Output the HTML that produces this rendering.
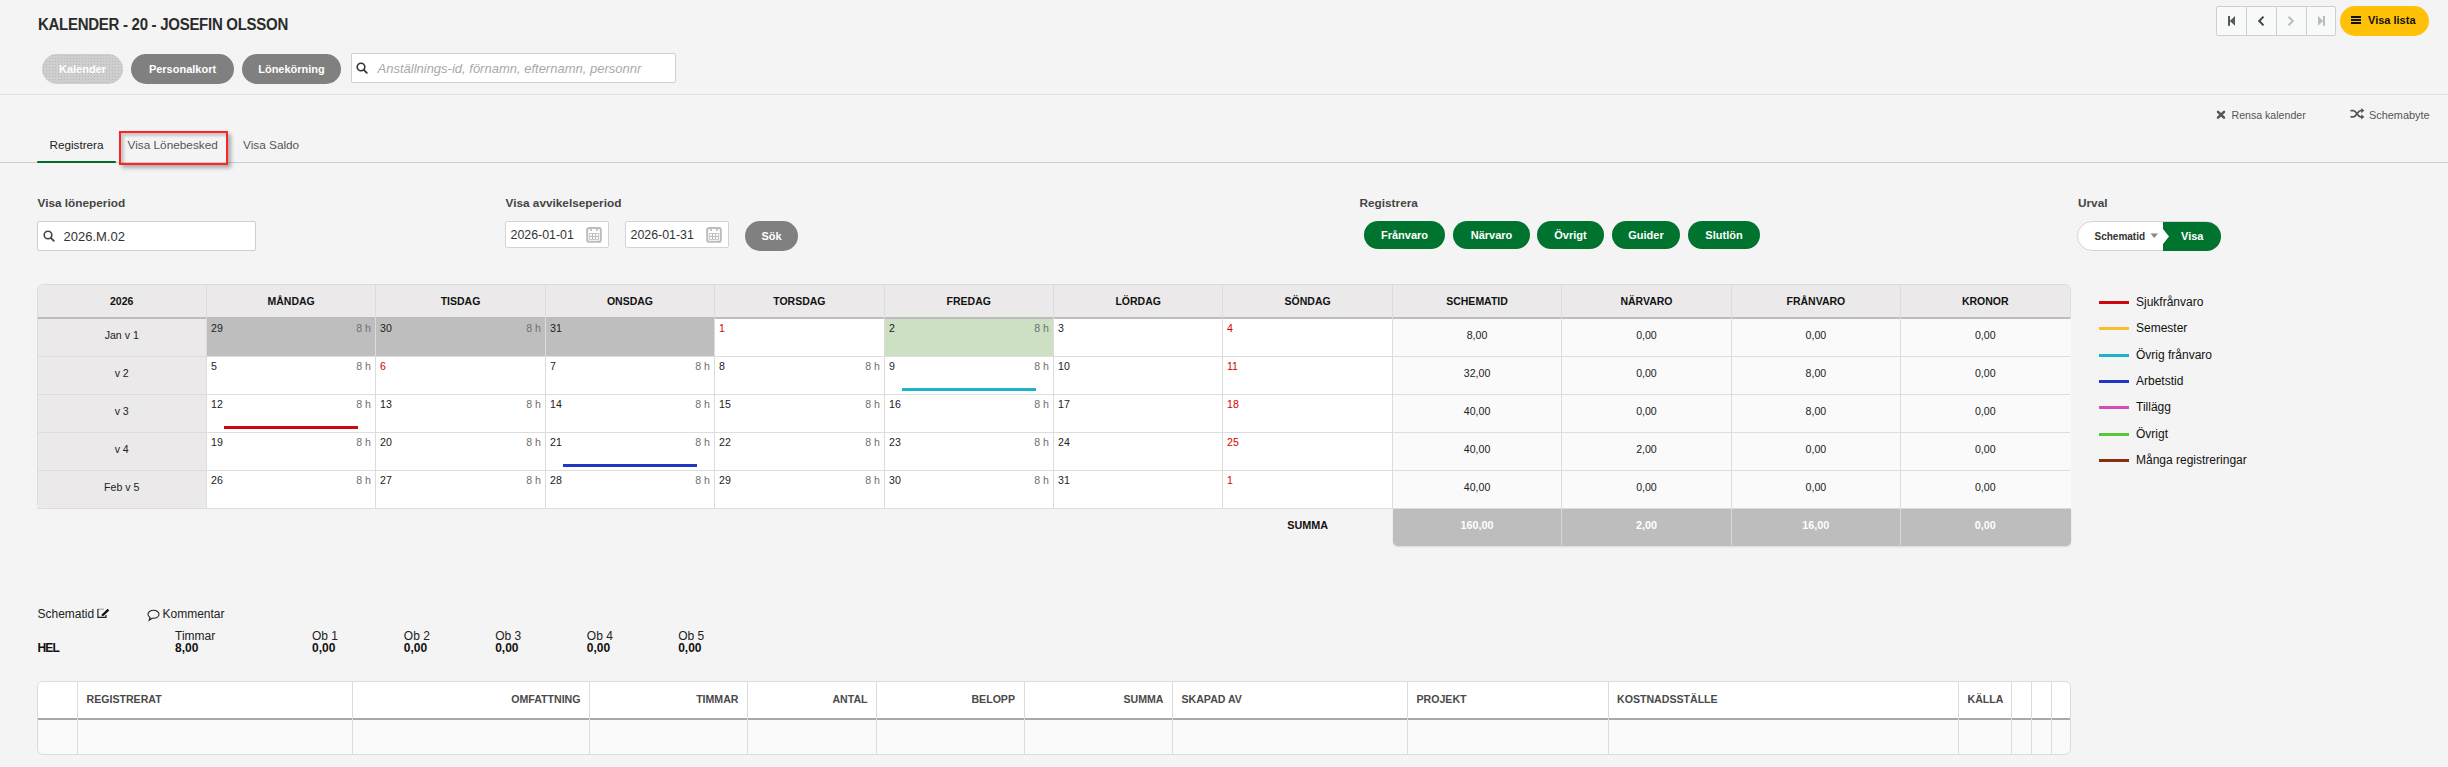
<!DOCTYPE html>
<html><head><meta charset="utf-8"><title>Kalender</title>
<style>
html,body{margin:0;padding:0;}
body{width:2448px;height:767px;position:relative;overflow:hidden;background:#f4f4f4;font-family:"Liberation Sans",sans-serif;}
.a{position:absolute;box-sizing:border-box;}
.t{position:absolute;white-space:nowrap;line-height:20px;font-family:"Liberation Sans",sans-serif;}
svg{position:absolute;overflow:visible;}
</style></head><body>
<div class="t" style="left:38px;top:15px;font-size:15.6px;font-weight:bold;color:#2b2b2b;letter-spacing:-0.3px;transform:scaleX(0.963);transform-origin:0 0;">KALENDER - 20 - JOSEFIN OLSSON</div>
<div class="a" style="left:42px;top:54px;width:81px;height:30px;background-color:#cecece;background-image:radial-gradient(circle, #b9b9b9 0.6px, transparent 0.9px);background-size:3px 3px;border-radius:15px;"></div>
<div class="t" style="left:42.0px;width:81px;text-align:center;top:59px;font-size:11px;font-weight:bold;color:#fff;">Kalender</div>
<div class="a" style="left:131px;top:54px;width:103px;height:30px;background:#808080;border-radius:15px;"></div>
<div class="t" style="left:131.0px;width:103px;text-align:center;top:59px;font-size:11px;font-weight:bold;color:#fff;">Personalkort</div>
<div class="a" style="left:242px;top:54px;width:99px;height:30px;background:#808080;border-radius:15px;"></div>
<div class="t" style="left:242.0px;width:99px;text-align:center;top:59px;font-size:11px;font-weight:bold;color:#fff;">Lönekörning</div>
<div class="a" style="left:351px;top:53px;width:325px;height:30px;background:#fff;border:1px solid #cfcfcf;border-radius:2px;"></div>
<svg style="left:356px;top:62px" width="13" height="13" viewBox="0 0 13 13"><circle cx="5" cy="5" r="3.8" fill="none" stroke="#333" stroke-width="1.6"/><line x1="7.8" y1="7.8" x2="10.8" y2="10.8" stroke="#333" stroke-width="1.8" stroke-linecap="round"/></svg>
<div class="t" style="left:377.5px;top:59px;font-size:13px;font-weight:normal;color:#a9a9a9;font-style:italic;">Anställnings-id, förnamn, efternamn, personnr</div>
<div class="a" style="left:0px;top:94px;width:2448px;height:1px;background:#e2e2e2;"></div>
<div class="a" style="left:2216px;top:6px;width:120px;height:30px;background:#f8f9f9;border:1px solid #cfcfcf;border-radius:2px;"></div>
<div class="a" style="left:2246px;top:7px;width:1px;height:28px;background:#cfcfcf;"></div>
<div class="a" style="left:2276px;top:7px;width:1px;height:28px;background:#cfcfcf;"></div>
<div class="a" style="left:2306px;top:7px;width:1px;height:28px;background:#cfcfcf;"></div>
<svg style="left:2227px;top:15px" width="10" height="11" viewBox="0 0 10 11"><rect x="1" y="1" width="2" height="9.8" fill="#585858"/><path d="M8 1 L8 10.8 L2.8 5.9 Z" fill="#585858"/></svg>
<svg style="left:2256px;top:15px" width="10" height="12" viewBox="0 0 10 12"><path d="M7.5 1.6 L3.2 6 L7.5 10.4" fill="none" stroke="#444" stroke-width="2"/></svg>
<svg style="left:2286px;top:15px" width="10" height="12" viewBox="0 0 10 12"><path d="M2.5 1.6 L6.8 6 L2.5 10.4" fill="none" stroke="#bbb" stroke-width="2"/></svg>
<svg style="left:2316px;top:15px" width="10" height="11" viewBox="0 0 10 11"><rect x="7" y="1" width="2" height="9.8" fill="#bbb"/><path d="M2 1 L2 10.8 L7.2 5.9 Z" fill="#bbb"/></svg>
<div class="a" style="left:2340px;top:6px;width:89px;height:30px;background:#ffc107;border-radius:15px;"></div>
<svg style="left:2351px;top:16px" width="10" height="9" viewBox="0 0 10 9"><rect x="0" y="0" width="10" height="2" fill="#111"/><rect x="0" y="3" width="10" height="2" fill="#111"/><rect x="0" y="6" width="10" height="2" fill="#111"/></svg>
<div class="t" style="left:2368px;top:10px;font-size:11px;font-weight:bold;color:#111;">Visa lista</div>
<div class="a" style="left:0px;top:162px;width:2448px;height:1px;background:#cccccc;"></div>
<div class="a" style="left:37px;top:161px;width:79px;height:2px;background:#006b2a;border-radius:1px;"></div>
<div class="t" style="left:49.5px;top:135px;font-size:11.7px;font-weight:normal;color:#222;">Registrera</div>
<div class="a" style="left:119px;top:131px;width:109px;height:34px;border:2px solid #ff2424;box-shadow:3px 3px 4px rgba(0,0,0,0.3), inset 3px 3px 3px rgba(0,0,0,0.18);"></div>
<div class="t" style="left:127.5px;top:135px;font-size:11.8px;font-weight:normal;color:#555;">Visa Lönebesked</div>
<div class="t" style="left:243px;top:135px;font-size:11.8px;font-weight:normal;color:#555;">Visa Saldo</div>
<svg style="left:2216px;top:110px" width="10" height="10" viewBox="0 0 10 10"><path d="M2 1.8 L8 7.6 M8 1.8 L2 7.6" stroke="#555" stroke-width="2.5" stroke-linecap="round"/></svg>
<div class="t" style="left:2231.5px;top:104.7px;font-size:10.6px;font-weight:normal;color:#555;">Rensa kalender</div>
<svg style="left:2350px;top:107px" width="15" height="13" viewBox="0 0 15 13"><path d="M0.5 3.6 H3.5 C6.5 3.6 7.5 9.9 10.5 9.9 H12" fill="none" stroke="#555" stroke-width="1.7"/><path d="M0.5 9.9 H3.5 C6.5 9.9 7.5 3.6 10.5 3.6 H12" fill="none" stroke="#555" stroke-width="1.7"/><path d="M11.3 0.9 L14.3 3.6 L11.3 6.3 Z" fill="#555"/><path d="M11.3 7.2 L14.3 9.9 L11.3 12.6 Z" fill="#555"/></svg>
<div class="t" style="left:2369px;top:104.7px;font-size:10.9px;font-weight:normal;color:#555;">Schemabyte</div>
<div class="t" style="left:37.5px;top:193px;font-size:11.8px;font-weight:bold;color:#444;">Visa löneperiod</div>
<div class="t" style="left:505.5px;top:193px;font-size:11.8px;font-weight:bold;color:#444;">Visa avvikelseperiod</div>
<div class="t" style="left:1359.5px;top:193px;font-size:11.8px;font-weight:bold;color:#444;">Registrera</div>
<div class="t" style="left:2078px;top:193px;font-size:11.8px;font-weight:bold;color:#444;">Urval</div>
<div class="a" style="left:37px;top:221px;width:219px;height:30px;background:#fff;border:1px solid #cfcfcf;border-radius:2px;"></div>
<svg style="left:43px;top:230px" width="13" height="13" viewBox="0 0 13 13"><circle cx="5" cy="5" r="3.8" fill="none" stroke="#444" stroke-width="1.6"/><line x1="7.8" y1="7.8" x2="10.8" y2="10.8" stroke="#444" stroke-width="1.8" stroke-linecap="round"/></svg>
<div class="t" style="left:63.5px;top:227px;font-size:13px;font-weight:normal;color:#333;">2026.M.02</div>
<div class="a" style="left:505px;top:221px;width:104px;height:27px;background:#fff;border:1px solid #d3d3d3;border-radius:2px;"></div>
<div class="t" style="left:510.5px;top:225px;font-size:12.4px;font-weight:normal;color:#333;">2026-01-01</div>
<svg style="left:586px;top:227px" width="16" height="16" viewBox="0 0 16 16"><rect x="1.2" y="1.1" width="13.6" height="13.6" rx="1.8" fill="none" stroke="#bcbcbc" stroke-width="2"/><rect x="4.2" y="2" width="1.7" height="2" fill="#bcbcbc"/><rect x="10.1" y="2" width="1.7" height="2" fill="#bcbcbc"/><rect x="3.2" y="6" width="9.6" height="6.8" fill="#bcbcbc"/><g fill="#fff"><rect x="4" y="6.9" width="2" height="2"/><rect x="7" y="6.9" width="2" height="2"/><rect x="9.9" y="6.9" width="2" height="2"/><rect x="4" y="10" width="2" height="2"/><rect x="7" y="10" width="2" height="2"/><rect x="9.9" y="10" width="2" height="2"/></g></svg>
<div class="a" style="left:625px;top:221px;width:104px;height:27px;background:#fff;border:1px solid #d3d3d3;border-radius:2px;"></div>
<div class="t" style="left:630.5px;top:225px;font-size:12.4px;font-weight:normal;color:#333;">2026-01-31</div>
<svg style="left:706px;top:227px" width="16" height="16" viewBox="0 0 16 16"><rect x="1.2" y="1.1" width="13.6" height="13.6" rx="1.8" fill="none" stroke="#bcbcbc" stroke-width="2"/><rect x="4.2" y="2" width="1.7" height="2" fill="#bcbcbc"/><rect x="10.1" y="2" width="1.7" height="2" fill="#bcbcbc"/><rect x="3.2" y="6" width="9.6" height="6.8" fill="#bcbcbc"/><g fill="#fff"><rect x="4" y="6.9" width="2" height="2"/><rect x="7" y="6.9" width="2" height="2"/><rect x="9.9" y="6.9" width="2" height="2"/><rect x="4" y="10" width="2" height="2"/><rect x="7" y="10" width="2" height="2"/><rect x="9.9" y="10" width="2" height="2"/></g></svg>
<div class="a" style="left:745px;top:221px;width:53px;height:30px;background:#808080;border-radius:15px;"></div>
<div class="t" style="left:745.0px;width:53px;text-align:center;top:226px;font-size:11px;font-weight:bold;color:#fff;">Sök</div>
<div class="a" style="left:1364px;top:221px;width:81px;height:28px;background:#00732f;border-radius:14px;"></div>
<div class="t" style="left:1364.0px;width:81px;text-align:center;top:225px;font-size:11px;font-weight:bold;color:#fff;">Frånvaro</div>
<div class="a" style="left:1453px;top:221px;width:77px;height:28px;background:#00732f;border-radius:14px;"></div>
<div class="t" style="left:1453.0px;width:77px;text-align:center;top:225px;font-size:11px;font-weight:bold;color:#fff;">Närvaro</div>
<div class="a" style="left:1537px;top:221px;width:67px;height:28px;background:#00732f;border-radius:14px;"></div>
<div class="t" style="left:1537.0px;width:67px;text-align:center;top:225px;font-size:11px;font-weight:bold;color:#fff;">Övrigt</div>
<div class="a" style="left:1612px;top:221px;width:68px;height:28px;background:#00732f;border-radius:14px;"></div>
<div class="t" style="left:1612.0px;width:68px;text-align:center;top:225px;font-size:11px;font-weight:bold;color:#fff;">Guider</div>
<div class="a" style="left:1688px;top:221px;width:72px;height:28px;background:#00732f;border-radius:14px;"></div>
<div class="t" style="left:1688.0px;width:72px;text-align:center;top:225px;font-size:11px;font-weight:bold;color:#fff;">Slutlön</div>
<div class="a" style="left:2077px;top:221px;width:144px;height:30px;background:#fff;border:1px solid #d5d5d5;border-radius:15px;"></div>
<div class="a" style="left:2163px;top:222px;width:58px;height:29px;background:#00732f;border-radius:0 15px 15px 0;"></div>
<svg style="left:2163px;top:222px" width="7" height="29" viewBox="0 0 7 29"><path d="M0 7 L6 14.5 L0 22 Z" fill="#fff"/></svg>
<div class="t" style="left:2094.5px;top:227px;font-size:10px;font-weight:bold;color:#333;">Schematid</div>
<svg style="left:2150px;top:233px" width="9" height="6" viewBox="0 0 9 6"><path d="M0.5 0.5 H8 L4.25 5 Z" fill="#888"/></svg>
<div class="t" style="left:2181px;top:226px;font-size:11px;font-weight:bold;color:#fff;">Visa</div>
<div class="a" style="left:37px;top:284px;width:2034px;height:225px;background:#fff;border:1px solid #dcdcdc;border-radius:6px 6px 5px 5px;overflow:hidden;"></div>
<div class="a" style="left:38px;top:285px;width:2032px;height:32px;background:#ebe9ea;border-radius:5px 5px 0 0;"></div>
<div class="a" style="left:38px;top:317px;width:2032px;height:2px;background:#bcbcbc;"></div>
<div class="a" style="left:38px;top:319px;width:168px;height:189px;background:#ebe9ea;border-radius:0 0 0 5px;"></div>
<div class="a" style="left:1393px;top:319px;width:677px;height:189px;background:#fafafa;"></div>
<div class="a" style="left:207px;top:319px;width:507px;height:37px;background:#bebebe;"></div>
<div class="a" style="left:885px;top:319px;width:168px;height:37px;background:#cde0c4;"></div>
<div class="a" style="left:38px;top:356px;width:2032px;height:1px;background:#dddddd;"></div>
<div class="a" style="left:38px;top:394px;width:2032px;height:1px;background:#dddddd;"></div>
<div class="a" style="left:38px;top:432px;width:2032px;height:1px;background:#dddddd;"></div>
<div class="a" style="left:38px;top:470px;width:2032px;height:1px;background:#dddddd;"></div>
<div class="a" style="left:206px;top:285px;width:1px;height:223px;background:#dcdcdc;"></div>
<div class="a" style="left:375px;top:285px;width:1px;height:223px;background:#dcdcdc;"></div>
<div class="a" style="left:545px;top:285px;width:1px;height:223px;background:#dcdcdc;"></div>
<div class="a" style="left:714px;top:285px;width:1px;height:223px;background:#dcdcdc;"></div>
<div class="a" style="left:884px;top:285px;width:1px;height:223px;background:#dcdcdc;"></div>
<div class="a" style="left:1053px;top:285px;width:1px;height:223px;background:#dcdcdc;"></div>
<div class="a" style="left:1222px;top:285px;width:1px;height:223px;background:#dcdcdc;"></div>
<div class="a" style="left:1392px;top:285px;width:1px;height:223px;background:#dcdcdc;"></div>
<div class="a" style="left:1561px;top:285px;width:1px;height:223px;background:#dcdcdc;"></div>
<div class="a" style="left:1731px;top:285px;width:1px;height:223px;background:#dcdcdc;"></div>
<div class="a" style="left:1900px;top:285px;width:1px;height:223px;background:#dcdcdc;"></div>
<div class="t" style="left:41.70833333333333px;width:160px;text-align:center;top:291px;font-size:10.5px;font-weight:bold;color:#111;">2026</div>
<div class="t" style="left:211.125px;width:160px;text-align:center;top:291px;font-size:10.5px;font-weight:bold;color:#111;">MÅNDAG</div>
<div class="t" style="left:380.54166666666663px;width:160px;text-align:center;top:291px;font-size:10.5px;font-weight:bold;color:#111;">TISDAG</div>
<div class="t" style="left:549.9583333333333px;width:160px;text-align:center;top:291px;font-size:10.5px;font-weight:bold;color:#111;">ONSDAG</div>
<div class="t" style="left:719.375px;width:160px;text-align:center;top:291px;font-size:10.5px;font-weight:bold;color:#111;">TORSDAG</div>
<div class="t" style="left:888.7916666666666px;width:160px;text-align:center;top:291px;font-size:10.5px;font-weight:bold;color:#111;">FREDAG</div>
<div class="t" style="left:1058.2083333333333px;width:160px;text-align:center;top:291px;font-size:10.5px;font-weight:bold;color:#111;">LÖRDAG</div>
<div class="t" style="left:1227.625px;width:160px;text-align:center;top:291px;font-size:10.5px;font-weight:bold;color:#111;">SÖNDAG</div>
<div class="t" style="left:1397.0416666666665px;width:160px;text-align:center;top:291px;font-size:10.5px;font-weight:bold;color:#111;">SCHEMATID</div>
<div class="t" style="left:1566.4583333333333px;width:160px;text-align:center;top:291px;font-size:10.5px;font-weight:bold;color:#111;">NÄRVARO</div>
<div class="t" style="left:1735.875px;width:160px;text-align:center;top:291px;font-size:10.5px;font-weight:bold;color:#111;">FRÅNVARO</div>
<div class="t" style="left:1905.2916666666665px;width:160px;text-align:center;top:291px;font-size:10.5px;font-weight:bold;color:#111;">KRONOR</div>
<div class="t" style="left:41.70833333333333px;width:160px;text-align:center;top:325px;font-size:10.6px;font-weight:normal;color:#222;">Jan v 1</div>
<div class="t" style="left:211px;top:318px;font-size:10.6px;font-weight:normal;color:#222;">29</div>
<div class="t" style="left:-29px;width:400px;text-align:right;top:318px;font-size:10.6px;font-weight:normal;color:#707070;">8 h</div>
<div class="t" style="left:380px;top:318px;font-size:10.6px;font-weight:normal;color:#222;">30</div>
<div class="t" style="left:141px;width:400px;text-align:right;top:318px;font-size:10.6px;font-weight:normal;color:#707070;">8 h</div>
<div class="t" style="left:550px;top:318px;font-size:10.6px;font-weight:normal;color:#222;">31</div>
<div class="t" style="left:719px;top:318px;font-size:10.6px;font-weight:normal;color:#d50000;">1</div>
<div class="t" style="left:889px;top:318px;font-size:10.6px;font-weight:normal;color:#222;">2</div>
<div class="t" style="left:649px;width:400px;text-align:right;top:318px;font-size:10.6px;font-weight:normal;color:#707070;">8 h</div>
<div class="t" style="left:1058px;top:318px;font-size:10.6px;font-weight:normal;color:#222;">3</div>
<div class="t" style="left:1227px;top:318px;font-size:10.6px;font-weight:normal;color:#d50000;">4</div>
<div class="t" style="left:1397.0416666666665px;width:160px;text-align:center;top:325px;font-size:10.6px;font-weight:normal;color:#222;">8,00</div>
<div class="t" style="left:1566.4583333333333px;width:160px;text-align:center;top:325px;font-size:10.6px;font-weight:normal;color:#222;">0,00</div>
<div class="t" style="left:1735.875px;width:160px;text-align:center;top:325px;font-size:10.6px;font-weight:normal;color:#222;">0,00</div>
<div class="t" style="left:1905.2916666666665px;width:160px;text-align:center;top:325px;font-size:10.6px;font-weight:normal;color:#222;">0,00</div>
<div class="t" style="left:41.70833333333333px;width:160px;text-align:center;top:363px;font-size:10.6px;font-weight:normal;color:#222;">v 2</div>
<div class="t" style="left:211px;top:356px;font-size:10.6px;font-weight:normal;color:#222;">5</div>
<div class="t" style="left:-29px;width:400px;text-align:right;top:356px;font-size:10.6px;font-weight:normal;color:#707070;">8 h</div>
<div class="t" style="left:380px;top:356px;font-size:10.6px;font-weight:normal;color:#d50000;">6</div>
<div class="t" style="left:550px;top:356px;font-size:10.6px;font-weight:normal;color:#222;">7</div>
<div class="t" style="left:310px;width:400px;text-align:right;top:356px;font-size:10.6px;font-weight:normal;color:#707070;">8 h</div>
<div class="t" style="left:719px;top:356px;font-size:10.6px;font-weight:normal;color:#222;">8</div>
<div class="t" style="left:480px;width:400px;text-align:right;top:356px;font-size:10.6px;font-weight:normal;color:#707070;">8 h</div>
<div class="t" style="left:889px;top:356px;font-size:10.6px;font-weight:normal;color:#222;">9</div>
<div class="t" style="left:649px;width:400px;text-align:right;top:356px;font-size:10.6px;font-weight:normal;color:#707070;">8 h</div>
<div class="t" style="left:1058px;top:356px;font-size:10.6px;font-weight:normal;color:#222;">10</div>
<div class="t" style="left:1227px;top:356px;font-size:10.6px;font-weight:normal;color:#d50000;">11</div>
<div class="t" style="left:1397.0416666666665px;width:160px;text-align:center;top:363px;font-size:10.6px;font-weight:normal;color:#222;">32,00</div>
<div class="t" style="left:1566.4583333333333px;width:160px;text-align:center;top:363px;font-size:10.6px;font-weight:normal;color:#222;">0,00</div>
<div class="t" style="left:1735.875px;width:160px;text-align:center;top:363px;font-size:10.6px;font-weight:normal;color:#222;">8,00</div>
<div class="t" style="left:1905.2916666666665px;width:160px;text-align:center;top:363px;font-size:10.6px;font-weight:normal;color:#222;">0,00</div>
<div class="t" style="left:41.70833333333333px;width:160px;text-align:center;top:401px;font-size:10.6px;font-weight:normal;color:#222;">v 3</div>
<div class="t" style="left:211px;top:394px;font-size:10.6px;font-weight:normal;color:#222;">12</div>
<div class="t" style="left:-29px;width:400px;text-align:right;top:394px;font-size:10.6px;font-weight:normal;color:#707070;">8 h</div>
<div class="t" style="left:380px;top:394px;font-size:10.6px;font-weight:normal;color:#222;">13</div>
<div class="t" style="left:141px;width:400px;text-align:right;top:394px;font-size:10.6px;font-weight:normal;color:#707070;">8 h</div>
<div class="t" style="left:550px;top:394px;font-size:10.6px;font-weight:normal;color:#222;">14</div>
<div class="t" style="left:310px;width:400px;text-align:right;top:394px;font-size:10.6px;font-weight:normal;color:#707070;">8 h</div>
<div class="t" style="left:719px;top:394px;font-size:10.6px;font-weight:normal;color:#222;">15</div>
<div class="t" style="left:480px;width:400px;text-align:right;top:394px;font-size:10.6px;font-weight:normal;color:#707070;">8 h</div>
<div class="t" style="left:889px;top:394px;font-size:10.6px;font-weight:normal;color:#222;">16</div>
<div class="t" style="left:649px;width:400px;text-align:right;top:394px;font-size:10.6px;font-weight:normal;color:#707070;">8 h</div>
<div class="t" style="left:1058px;top:394px;font-size:10.6px;font-weight:normal;color:#222;">17</div>
<div class="t" style="left:1227px;top:394px;font-size:10.6px;font-weight:normal;color:#d50000;">18</div>
<div class="t" style="left:1397.0416666666665px;width:160px;text-align:center;top:401px;font-size:10.6px;font-weight:normal;color:#222;">40,00</div>
<div class="t" style="left:1566.4583333333333px;width:160px;text-align:center;top:401px;font-size:10.6px;font-weight:normal;color:#222;">0,00</div>
<div class="t" style="left:1735.875px;width:160px;text-align:center;top:401px;font-size:10.6px;font-weight:normal;color:#222;">8,00</div>
<div class="t" style="left:1905.2916666666665px;width:160px;text-align:center;top:401px;font-size:10.6px;font-weight:normal;color:#222;">0,00</div>
<div class="t" style="left:41.70833333333333px;width:160px;text-align:center;top:439px;font-size:10.6px;font-weight:normal;color:#222;">v 4</div>
<div class="t" style="left:211px;top:432px;font-size:10.6px;font-weight:normal;color:#222;">19</div>
<div class="t" style="left:-29px;width:400px;text-align:right;top:432px;font-size:10.6px;font-weight:normal;color:#707070;">8 h</div>
<div class="t" style="left:380px;top:432px;font-size:10.6px;font-weight:normal;color:#222;">20</div>
<div class="t" style="left:141px;width:400px;text-align:right;top:432px;font-size:10.6px;font-weight:normal;color:#707070;">8 h</div>
<div class="t" style="left:550px;top:432px;font-size:10.6px;font-weight:normal;color:#222;">21</div>
<div class="t" style="left:310px;width:400px;text-align:right;top:432px;font-size:10.6px;font-weight:normal;color:#707070;">8 h</div>
<div class="t" style="left:719px;top:432px;font-size:10.6px;font-weight:normal;color:#222;">22</div>
<div class="t" style="left:480px;width:400px;text-align:right;top:432px;font-size:10.6px;font-weight:normal;color:#707070;">8 h</div>
<div class="t" style="left:889px;top:432px;font-size:10.6px;font-weight:normal;color:#222;">23</div>
<div class="t" style="left:649px;width:400px;text-align:right;top:432px;font-size:10.6px;font-weight:normal;color:#707070;">8 h</div>
<div class="t" style="left:1058px;top:432px;font-size:10.6px;font-weight:normal;color:#222;">24</div>
<div class="t" style="left:1227px;top:432px;font-size:10.6px;font-weight:normal;color:#d50000;">25</div>
<div class="t" style="left:1397.0416666666665px;width:160px;text-align:center;top:439px;font-size:10.6px;font-weight:normal;color:#222;">40,00</div>
<div class="t" style="left:1566.4583333333333px;width:160px;text-align:center;top:439px;font-size:10.6px;font-weight:normal;color:#222;">2,00</div>
<div class="t" style="left:1735.875px;width:160px;text-align:center;top:439px;font-size:10.6px;font-weight:normal;color:#222;">0,00</div>
<div class="t" style="left:1905.2916666666665px;width:160px;text-align:center;top:439px;font-size:10.6px;font-weight:normal;color:#222;">0,00</div>
<div class="t" style="left:41.70833333333333px;width:160px;text-align:center;top:477px;font-size:10.6px;font-weight:normal;color:#222;">Feb v 5</div>
<div class="t" style="left:211px;top:470px;font-size:10.6px;font-weight:normal;color:#222;">26</div>
<div class="t" style="left:-29px;width:400px;text-align:right;top:470px;font-size:10.6px;font-weight:normal;color:#707070;">8 h</div>
<div class="t" style="left:380px;top:470px;font-size:10.6px;font-weight:normal;color:#222;">27</div>
<div class="t" style="left:141px;width:400px;text-align:right;top:470px;font-size:10.6px;font-weight:normal;color:#707070;">8 h</div>
<div class="t" style="left:550px;top:470px;font-size:10.6px;font-weight:normal;color:#222;">28</div>
<div class="t" style="left:310px;width:400px;text-align:right;top:470px;font-size:10.6px;font-weight:normal;color:#707070;">8 h</div>
<div class="t" style="left:719px;top:470px;font-size:10.6px;font-weight:normal;color:#222;">29</div>
<div class="t" style="left:480px;width:400px;text-align:right;top:470px;font-size:10.6px;font-weight:normal;color:#707070;">8 h</div>
<div class="t" style="left:889px;top:470px;font-size:10.6px;font-weight:normal;color:#222;">30</div>
<div class="t" style="left:649px;width:400px;text-align:right;top:470px;font-size:10.6px;font-weight:normal;color:#707070;">8 h</div>
<div class="t" style="left:1058px;top:470px;font-size:10.6px;font-weight:normal;color:#222;">31</div>
<div class="t" style="left:1227px;top:470px;font-size:10.6px;font-weight:normal;color:#d50000;">1</div>
<div class="t" style="left:1397.0416666666665px;width:160px;text-align:center;top:477px;font-size:10.6px;font-weight:normal;color:#222;">40,00</div>
<div class="t" style="left:1566.4583333333333px;width:160px;text-align:center;top:477px;font-size:10.6px;font-weight:normal;color:#222;">0,00</div>
<div class="t" style="left:1735.875px;width:160px;text-align:center;top:477px;font-size:10.6px;font-weight:normal;color:#222;">0,00</div>
<div class="t" style="left:1905.2916666666665px;width:160px;text-align:center;top:477px;font-size:10.6px;font-weight:normal;color:#222;">0,00</div>
<div class="a" style="left:224px;top:426px;width:134px;height:3px;background:#d0070f;"></div>
<div class="a" style="left:902px;top:388px;width:134px;height:3px;background:#1db3c9;"></div>
<div class="a" style="left:563px;top:464px;width:134px;height:3px;background:#2236c6;"></div>
<div class="a" style="left:2070px;top:319px;width:1px;height:189px;background:#fafafa;"></div>
<div class="a" style="left:37px;top:508px;width:2034px;height:1px;background:#dcdcdc;"></div>
<div class="a" style="left:1393px;top:509px;width:678px;height:37px;background:#bdbdbd;border-radius:0 0 5px 5px;box-shadow:0 1px 2px rgba(0,0,0,0.12);"></div>
<div class="a" style="left:1561px;top:509px;width:1px;height:37px;background:#d6d6d6;"></div>
<div class="a" style="left:1731px;top:509px;width:1px;height:37px;background:#d6d6d6;"></div>
<div class="a" style="left:1900px;top:509px;width:1px;height:37px;background:#d6d6d6;"></div>
<div class="t" style="left:1227.625px;width:160px;text-align:center;top:515px;font-size:10.8px;font-weight:bold;color:#111;">SUMMA</div>
<div class="t" style="left:1397.0416666666665px;width:160px;text-align:center;top:515px;font-size:10.8px;font-weight:bold;color:#fff;">160,00</div>
<div class="t" style="left:1566.4583333333333px;width:160px;text-align:center;top:515px;font-size:10.8px;font-weight:bold;color:#fff;">2,00</div>
<div class="t" style="left:1735.875px;width:160px;text-align:center;top:515px;font-size:10.8px;font-weight:bold;color:#fff;">16,00</div>
<div class="t" style="left:1905.2916666666665px;width:160px;text-align:center;top:515px;font-size:10.8px;font-weight:bold;color:#fff;">0,00</div>
<div class="a" style="left:2099px;top:301px;width:30px;height:3px;background:#d0070f;"></div>
<div class="t" style="left:2136px;top:292px;font-size:12px;font-weight:normal;color:#111;">Sjukfrånvaro</div>
<div class="a" style="left:2099px;top:327px;width:30px;height:3px;background:#fbbd2b;"></div>
<div class="t" style="left:2136px;top:318px;font-size:12px;font-weight:normal;color:#111;">Semester</div>
<div class="a" style="left:2099px;top:354px;width:30px;height:3px;background:#1db3c9;"></div>
<div class="t" style="left:2136px;top:345px;font-size:12px;font-weight:normal;color:#111;">Övrig frånvaro</div>
<div class="a" style="left:2099px;top:380px;width:30px;height:3px;background:#2236c6;"></div>
<div class="t" style="left:2136px;top:371px;font-size:12px;font-weight:normal;color:#111;">Arbetstid</div>
<div class="a" style="left:2099px;top:406px;width:30px;height:3px;background:#d24fb8;"></div>
<div class="t" style="left:2136px;top:397px;font-size:12px;font-weight:normal;color:#111;">Tillägg</div>
<div class="a" style="left:2099px;top:433px;width:30px;height:3px;background:#57c83b;"></div>
<div class="t" style="left:2136px;top:424px;font-size:12px;font-weight:normal;color:#111;">Övrigt</div>
<div class="a" style="left:2099px;top:459px;width:30px;height:3px;background:#8a2d0c;"></div>
<div class="t" style="left:2136px;top:450px;font-size:12px;font-weight:normal;color:#111;">Många registreringar</div>
<div class="t" style="left:37.5px;top:604px;font-size:12px;font-weight:normal;color:#222;">Schematid</div>
<svg style="left:97px;top:608px" width="13" height="11" viewBox="0 0 13 11"><path d="M0.9 1.2 H7" fill="none" stroke="#aaa" stroke-width="1.2"/><path d="M0.9 1 V9.4 H9 V7" fill="none" stroke="#222" stroke-width="1.2"/><path d="M4.6 8.2 L5 6.2 L10.6 0.8 L12.3 2.5 L6.7 7.8 Z" fill="#111"/></svg>
<svg style="left:147px;top:608.5px" width="13" height="13" viewBox="0 0 13 13"><path d="M6.5 1.3 C3.3 1.3 1 3.1 1 5.3 C1 6.6 1.8 7.7 3 8.4 L2.2 11.2 L5.2 9.2 C5.6 9.3 6 9.3 6.5 9.3 C9.7 9.3 12 7.5 12 5.3 C12 3.1 9.7 1.3 6.5 1.3 Z" fill="none" stroke="#222" stroke-width="1.1"/></svg>
<div class="t" style="left:162.5px;top:604px;font-size:12px;font-weight:normal;color:#222;">Kommentar</div>
<div class="t" style="left:37.5px;top:638px;font-size:12px;font-weight:bold;color:#111;letter-spacing:-0.8px;">HEL</div>
<div class="t" style="left:175px;top:626px;font-size:12px;font-weight:normal;color:#222;">Timmar</div>
<div class="t" style="left:175px;top:638px;font-size:12px;font-weight:bold;color:#111;">8,00</div>
<div class="t" style="left:312px;top:626px;font-size:12px;font-weight:normal;color:#222;">Ob 1</div>
<div class="t" style="left:312px;top:638px;font-size:12px;font-weight:bold;color:#111;">0,00</div>
<div class="t" style="left:403.8px;top:626px;font-size:12px;font-weight:normal;color:#222;">Ob 2</div>
<div class="t" style="left:403.8px;top:638px;font-size:12px;font-weight:bold;color:#111;">0,00</div>
<div class="t" style="left:495.2px;top:626px;font-size:12px;font-weight:normal;color:#222;">Ob 3</div>
<div class="t" style="left:495.2px;top:638px;font-size:12px;font-weight:bold;color:#111;">0,00</div>
<div class="t" style="left:586.8px;top:626px;font-size:12px;font-weight:normal;color:#222;">Ob 4</div>
<div class="t" style="left:586.8px;top:638px;font-size:12px;font-weight:bold;color:#111;">0,00</div>
<div class="t" style="left:678.2px;top:626px;font-size:12px;font-weight:normal;color:#222;">Ob 5</div>
<div class="t" style="left:678.2px;top:638px;font-size:12px;font-weight:bold;color:#111;">0,00</div>
<div class="a" style="left:37px;top:681px;width:2034px;height:74px;background:#fafafa;border:1px solid #dcdcdc;border-radius:6px;overflow:hidden;"></div>
<div class="a" style="left:38px;top:682px;width:2032px;height:36px;background:#fff;border-radius:5px 5px 0 0;"></div>
<div class="a" style="left:38px;top:718px;width:2032px;height:2px;background:#a9a9a9;"></div>
<div class="a" style="left:77px;top:682px;width:1px;height:72px;background:#dcdcdc;"></div>
<div class="a" style="left:352px;top:682px;width:1px;height:72px;background:#dcdcdc;"></div>
<div class="a" style="left:589px;top:682px;width:1px;height:72px;background:#dcdcdc;"></div>
<div class="a" style="left:747px;top:682px;width:1px;height:72px;background:#dcdcdc;"></div>
<div class="a" style="left:876px;top:682px;width:1px;height:72px;background:#dcdcdc;"></div>
<div class="a" style="left:1024px;top:682px;width:1px;height:72px;background:#dcdcdc;"></div>
<div class="a" style="left:1172px;top:682px;width:1px;height:72px;background:#dcdcdc;"></div>
<div class="a" style="left:1407px;top:682px;width:1px;height:72px;background:#dcdcdc;"></div>
<div class="a" style="left:1608px;top:682px;width:1px;height:72px;background:#dcdcdc;"></div>
<div class="a" style="left:1958px;top:682px;width:1px;height:72px;background:#dcdcdc;"></div>
<div class="a" style="left:2011px;top:682px;width:1px;height:72px;background:#dcdcdc;"></div>
<div class="a" style="left:2031px;top:682px;width:1px;height:72px;background:#dcdcdc;"></div>
<div class="a" style="left:2051px;top:682px;width:1px;height:72px;background:#dcdcdc;"></div>
<div class="t" style="left:86.5px;top:689px;font-size:10.6px;font-weight:bold;color:#4a4a4a;">REGISTRERAT</div>
<div class="t" style="left:180.5px;width:400px;text-align:right;top:689px;font-size:10.6px;font-weight:bold;color:#4a4a4a;">OMFATTNING</div>
<div class="t" style="left:338.5px;width:400px;text-align:right;top:689px;font-size:10.6px;font-weight:bold;color:#4a4a4a;">TIMMAR</div>
<div class="t" style="left:467.5px;width:400px;text-align:right;top:689px;font-size:10.6px;font-weight:bold;color:#4a4a4a;">ANTAL</div>
<div class="t" style="left:615px;width:400px;text-align:right;top:689px;font-size:10.6px;font-weight:bold;color:#4a4a4a;">BELOPP</div>
<div class="t" style="left:763.5px;width:400px;text-align:right;top:689px;font-size:10.6px;font-weight:bold;color:#4a4a4a;">SUMMA</div>
<div class="t" style="left:1181.5px;top:689px;font-size:10.6px;font-weight:bold;color:#4a4a4a;">SKAPAD AV</div>
<div class="t" style="left:1416.5px;top:689px;font-size:10.6px;font-weight:bold;color:#4a4a4a;">PROJEKT</div>
<div class="t" style="left:1617px;top:689px;font-size:10.6px;font-weight:bold;color:#4a4a4a;">KOSTNADSSTÄLLE</div>
<div class="t" style="left:1967.5px;top:689px;font-size:10.6px;font-weight:bold;color:#4a4a4a;">KÄLLA</div>
</body></html>
